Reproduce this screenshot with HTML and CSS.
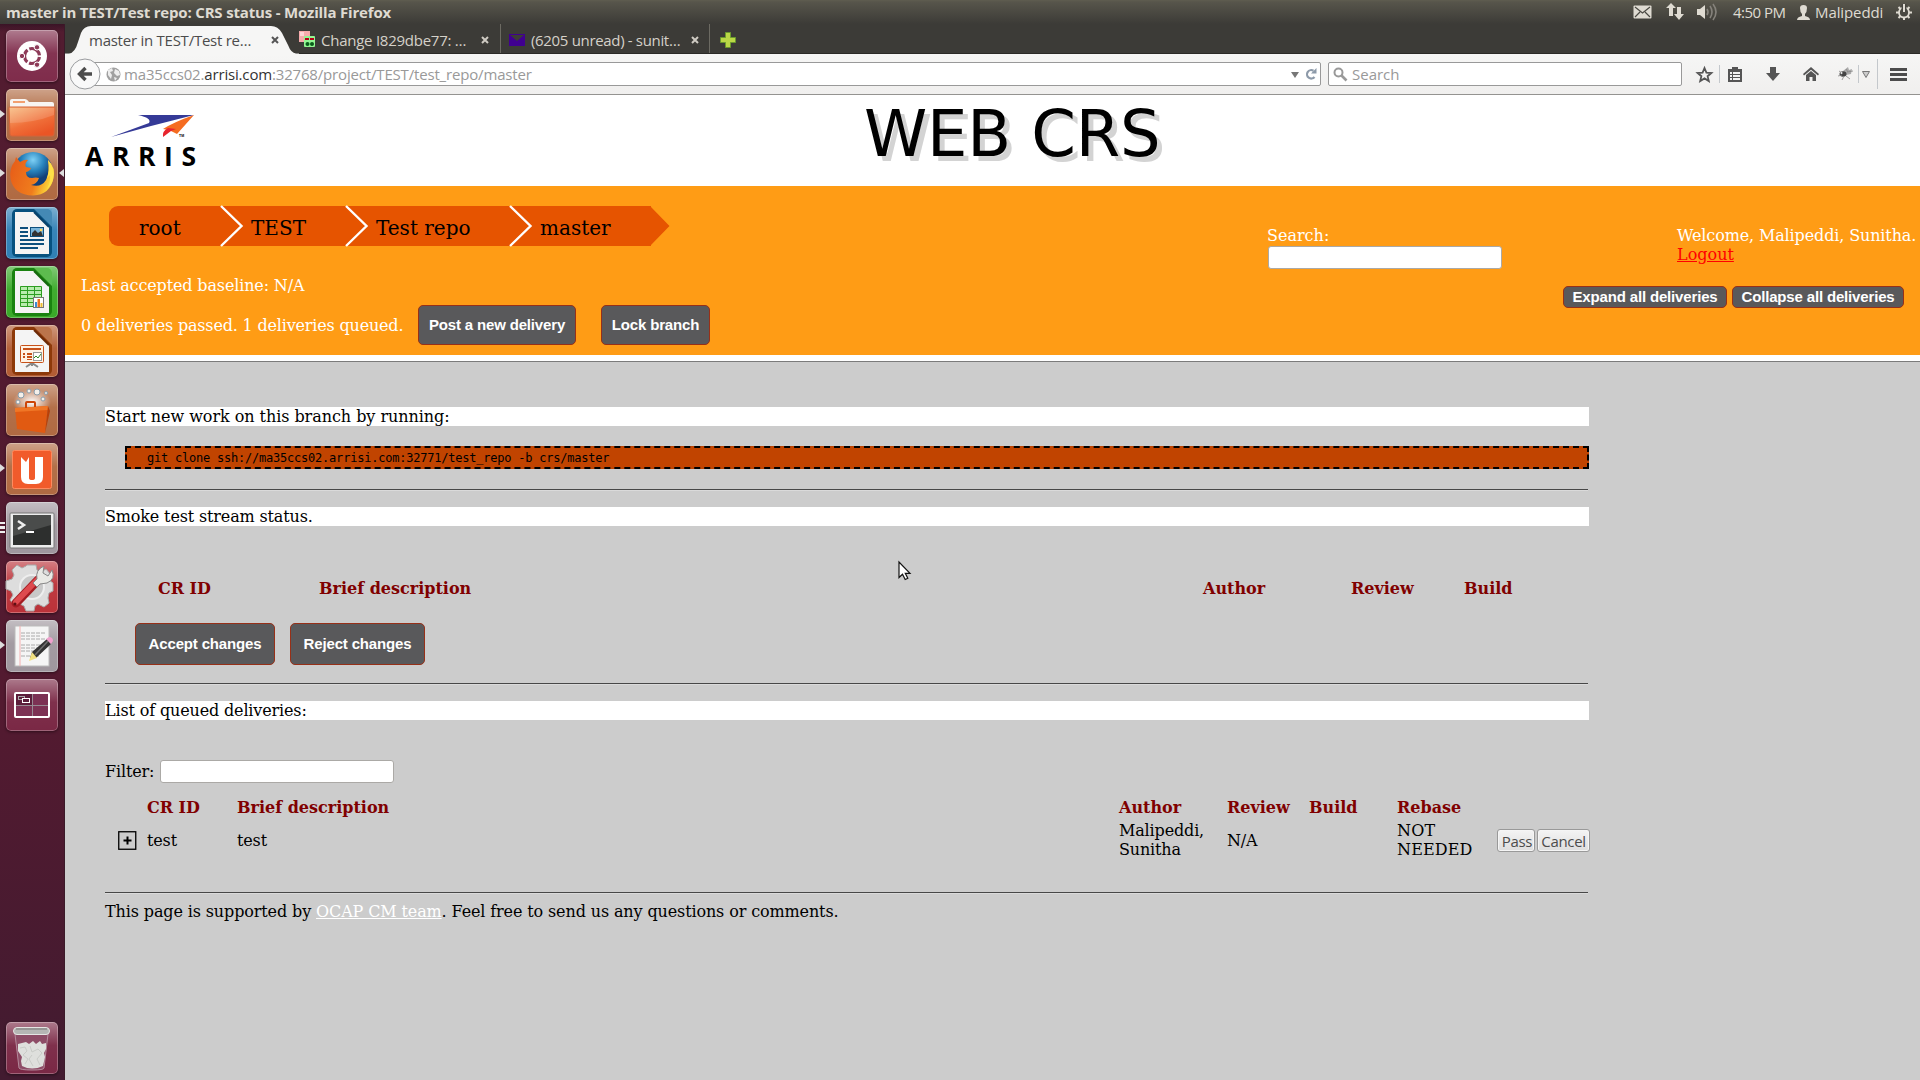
FILE: index.html
```
<!DOCTYPE html>
<html lang="en">
<head>
<meta charset="utf-8">
<title>master in TEST/Test repo: CRS status</title>
<link rel="stylesheet" href="styles.css">
</head>
<body>
<header class="panel">
  <div class="panel-title">master in TEST/Test repo: CRS status - Mozilla Firefox</div>
  <svg class="ind mail" width="19" height="14" viewBox="0 0 19 14"><rect x=".5" y=".5" width="18" height="13" rx="1" fill="#dfdbd2"/><path d="M2 2l7.500 6L17 2M2 12l5-5M17 12l-5-5" fill="none" stroke="#4a4943" stroke-width="1.200"/></svg>
  <svg class="ind net" width="19" height="18" viewBox="0 0 19 18"><path d="M5 0l5 5H7v8H3V5H0zM11 4h4v7h3l-5 6-5-6h3z" fill="#dfdbd2"/></svg>
  <svg class="ind vol" width="21" height="18" viewBox="0 0 21 18"><path d="M0 6h3l5-4v14l-5-4H0z" fill="#dfdbd2"/><path d="M10 6q2 3 0 6M13 3q4 6 0 12M16 1q6 8 0 16" fill="none" stroke="#85827b" stroke-width="1.600"/></svg>
  <span class="clock">4:50 PM</span>
  <svg class="ind user" width="13" height="15" viewBox="0 0 13 15"><path d="M3 3q0-3 3.500-3T10 3q0 4-2 6v2q5 1 5 4H0q0-3 5-4V9Q3 7 3 3z" fill="#dfdbd2"/></svg>
  <span class="who">Malipeddi</span>
  <svg class="ind gear" width="16" height="16" viewBox="0 0 16 16"><circle cx="8" cy="8.500" r="5" fill="none" stroke="#dfdbd2" stroke-width="1.800"/><path d="M0 8.500h3M13 8.500h3M8 13v3M2.500 3l2 2M13.500 3l-2 2M2.500 14l2-2M13.500 14l-2-2" stroke="#dfdbd2" stroke-width="2"/><path d="M8 0v8" stroke="#46453f" stroke-width="5"/><path d="M8 0v8" stroke="#dfdbd2" stroke-width="2"/></svg>
</header>
<div class="desktop">
  <nav class="launcher">
    <div class="tile dash"><svg width="52" height="52" viewBox="0 0 52 52"><circle cx="26" cy="26" r="15" fill="#fff"/><circle cx="26" cy="26" r="7.500" fill="none" stroke="#8d3a58" stroke-width="3.200" stroke-dasharray="13.700 2" stroke-dashoffset="-1"/><g fill="#8d3a58" stroke="#fff" stroke-width="1"><circle cx="16" cy="26" r="2.700"/><circle cx="31" cy="17.300" r="2.700"/><circle cx="31" cy="34.700" r="2.700"/></g></svg></div>
    <div class="tile brown"><i class="run"></i><svg width="52" height="52" viewBox="0 0 52 52"><defs><linearGradient id="fo" x2=".6" y2="1"><stop stop-color="#f8bd80"/><stop offset=".6" stop-color="#f0703a"/><stop offset="1" stop-color="#ea5525"/></linearGradient></defs><path d="M4 12q0-2 2-2h13q2 0 4 3h23q2 0 2 2v5H4z" fill="#f8f5f2"/><path d="M7 12h12v2H7z" fill="#f2a070"/><path d="M3 19q0-1 1-1h44q1 0 1 1l-1 26q0 2-2 2H6q-2 0-2-2z" fill="url(#fo)" stroke="#d5653a"/><path d="M4 34q24 0 44-8V19H4z" fill="#fff" opacity=".15"/></svg></div>
    <div class="tile brown"><i class="run"></i><i class="focus"></i><svg width="52" height="52" viewBox="0 0 52 52"><defs><radialGradient id="gl" cx=".5" cy=".2"><stop stop-color="#7ed0f5"/><stop offset=".55" stop-color="#2783bd"/><stop offset="1" stop-color="#123f78"/></radialGradient><linearGradient id="fx" x2="1" y2=".3"><stop stop-color="#e65a18"/><stop offset=".7" stop-color="#f07d1d"/><stop offset="1" stop-color="#fbd036"/></linearGradient></defs><circle cx="27" cy="24" r="20" fill="url(#gl)"/><path d="M42 12q8 8 5.500 18Q44 47 27 47.500 8 47 4.500 31 3 20 9 13l1-4 4 5q5-3 8-2-4 4-2 7l5 1q-1 3-5 4 0 6 6 6 4-1 7 0-2 6-8 7 10 3 15-5 4-8 2-20z" fill="url(#fx)"/><path d="M42 12q8 8 5 20-2 6-6 9 4-8 3-14l-3 3q3-8 1-18z" fill="#ffdf48"/></svg></div>
    <div class="tile blue"><svg width="52" height="52" viewBox="0 0 52 52"><rect x="6" y="2" width="40" height="48" rx="5" fill="#07517f"/><path d="M28 2h18v18z" fill="#5ea1cc" opacity=".7"/><path d="M9 5h19l15 15v27H9z" fill="#f4f4f4"/><path d="M28 5l15 15" stroke="#07416b" stroke-width="2"/><g fill="#0d4f7d"><path d="M14 20h8v2h-8zM14 24h8v2h-8zM14 28h8v2h-8zM14 32h24v2H14zM14 36h24v2H14zM14 40h18v2H14z"/></g><rect x="24.500" y="20.500" width="13" height="9" fill="#7ab5da" stroke="#0d4f7d"/><path d="M26 29v-3l3-3 3 3 3-2 2 5z" fill="#333"/><circle cx="35" cy="23" r="1.300" fill="#ffd75a"/></svg></div>
    <div class="tile green"><svg width="52" height="52" viewBox="0 0 52 52"><rect x="6" y="2" width="40" height="48" rx="5" fill="#1a8210"/><path d="M28 2h18v18z" fill="#7bd36a" opacity=".7"/><path d="M9 5h19l15 15v27H9z" fill="#f4f4f4"/><path d="M28 5l15 15" stroke="#16680e" stroke-width="2"/><path d="M14.500 20.500h21v20h-21zM14.500 24.500h21M14.500 28.500h21M14.500 32.500h21M14.500 36.500h21M21.500 20v20M28.500 20v20" fill="#b9ecae" stroke="#2d9e21"/><rect x="27.500" y="31.500" width="10" height="10" fill="#fff" stroke="#777"/><path d="M29 36h2v5h-2z" fill="#3b8bd4"/><path d="M31.500 33h2.500v8h-2.500z" fill="#ed7020"/><path d="M34.500 37h2v4h-2z" fill="#edbd30"/></svg></div>
    <div class="tile rust"><svg width="52" height="52" viewBox="0 0 52 52"><rect x="6" y="2" width="40" height="48" rx="5" fill="#8d3909"/><path d="M28 2h18v18z" fill="#cf8d68" opacity=".7"/><path d="M9 5h19l15 15v27H9z" fill="#f4f4f4"/><path d="M28 5l15 15" stroke="#6b2a07" stroke-width="2"/><path d="M26 37v4M20 42l6-4 6 4" fill="none" stroke="#888" stroke-width="2"/><rect x="14.500" y="20.500" width="23" height="17" rx="1" fill="#fff3e5" stroke="#c75119"/><path d="M17 23h18v2H17zM21 28h5v2h-5zM21 31h5v2h-5zM21 34h5v1h-5zM17 28h2v2h-2zM17 31h2v2h-2z" fill="#c75119"/><rect x="27.500" y="27.500" width="8" height="8" fill="#fff" stroke="#999"/><path d="M28 33l2-2 2 2 3-4" fill="none" stroke="#2a8a20"/></svg></div>
    <div class="tile brown"><svg width="52" height="52" viewBox="0 0 52 52"><defs><radialGradient id="bs"><stop stop-color="#fff"/><stop offset="1" stop-color="#fff" stop-opacity="0"/></radialGradient></defs><ellipse cx="26" cy="18" rx="19" ry="13" fill="url(#bs)"/><g fill="#f4f0ea" stroke="#8a9dab"><circle cx="15" cy="11" r="3"/><circle cx="23" cy="7" r="2"/><circle cx="31" cy="8" r="3"/><circle cx="37" cy="15" r="2"/><circle cx="40" cy="9" r="1.500"/><circle cx="12" cy="18" r="2"/></g><path d="M9 24l33-2-3 27-28-4z" fill="#e15a12"/><path d="M9 24l33-2v4l-33 2z" fill="#f07626"/><path d="M20 24v-5q0-1 1-1h7q1 0 1 1v4" fill="none" stroke="#cc4508" stroke-width="2"/><path d="M42 22l2 5-5 22z" fill="#b84009"/></svg></div>
    <div class="tile brown"><i class="run"></i><svg width="52" height="52" viewBox="0 0 52 52"><rect x="6.500" y="7.500" width="39" height="38" rx="2" fill="#f15b2b" stroke="#ff8a5e"/><path d="M15 14l5 5 3-5v21q0 2 3 2t3-2V14h8v20q0 7-7 7h-8q-7 0-7-7z" fill="#fff"/></svg></div>
    <div class="tile grey"><i class="multi"></i><svg width="52" height="52" viewBox="0 0 52 52"><rect x="4" y="11" width="44" height="35" rx="1" fill="#ededed" stroke="#777"/><rect x="7" y="13" width="38" height="30" fill="#2d2f2e"/><path d="M7 13h38v10L7 34z" fill="#4a4c4b"/><path d="M12 19l6 4-6 4" fill="none" stroke="#eee" stroke-width="2.500"/><path d="M20 30h8" stroke="#fff" stroke-width="2"/></svg></div>
    <div class="tile red"><svg width="52" height="52" viewBox="0 0 52 52"><path d="M21 4h9l1 5 4 2 5-3 5 6-2 5 4 3v8l-4 2-1 5 1 5-5 4-6-3-3 2-1 5h-8l-2-5-4-2-5 2-5-6 3-5-2-4-5-2v-8l6-2 2-4-2-5 5-5 5 3 4-2z" fill="#ddd" stroke="#aaa"/><circle cx="26" cy="26" r="12" fill="#c8c8c8" stroke="#eee" stroke-width="2"/><path d="M10 42l22-23" stroke="#a41c22" stroke-width="9" stroke-linecap="round"/><path d="M10 41l21-22" stroke="#de4a4e" stroke-width="5.500" stroke-linecap="round"/><path d="M31 18q-2-9 7-13l-1 7 5 3 4-6q4 9-5 13l-7 1-3 3-4-4z" fill="#e9e9e5" stroke="#888"/><circle cx="9" cy="43" r="1.500" fill="#5c1014"/></svg></div>
    <div class="tile grey"><i class="run"></i><svg width="52" height="52" viewBox="0 0 52 52"><rect x="9" y="6" width="34" height="40" fill="#f5f5f5" stroke="#bbb"/><path d="M14 6v40" stroke="#f5b0b0"/><path d="M15 13h24M15 16h20M15 19h24M15 25h24M15 28h20M15 31h22M15 36h18" stroke="#aaa" stroke-dasharray="4 1"/><path d="M24 38l2-6 15-13 4 5-15 14z" fill="#333"/><path d="M29 35l13-14" stroke="#6f6f6f" stroke-width="1.500"/><path d="M23 41l3-9 5 6z" fill="#f0e080"/><path d="M40 19l3-2q4 0 4 4l-2 3z" fill="#f0a0cd"/></svg></div>
    <div class="tile plum"><svg width="52" height="52" viewBox="0 0 52 52"><path d="M9 14h34v24H9z" fill="#5c1e3b"/><path d="M27 14h16v24H9V26h18z" fill="#7c3254"/><path d="M26.500 15v22M10 26.500h32" stroke="#978b93"/><rect x="9" y="14" width="34" height="24" rx="1" fill="none" stroke="#fff" stroke-width="2"/><rect x="12.500" y="17.500" width="6" height="3" fill="none" stroke="#aaa"/><rect x="16.500" y="19.500" width="7" height="4" fill="#5c1e3b" stroke="#fff"/></svg></div>
    <div class="tile plum trash"><svg width="52" height="52" viewBox="0 0 52 52"><path d="M9 12h33l-4 34q0 2-12 2t-13-2z" fill="#8d4c66" stroke="#b48a9b"/><path d="M12 22l4-1 4-1 3 2 4-3 3 3 4-3 2 3 4-1v6l-2 4 1 4-2 9q-11 5-21 0l-1-5 1-4-4-6z" fill="#dedfdc"/><path d="M14 26l5-1 2 4-4 4 5 4-3 5M24 24l2 6 6-3 4 4-5 6 3 6M26 33l-3 4 4 7" stroke="#c9cbc7" fill="none"/><rect x="7.500" y="5.500" width="36" height="7" rx="3.500" fill="#b5b6b4" stroke="#e5e5e3"/><path d="M10 7h31" stroke="#777"/></svg></div>
  </nav>
  <div class="window">
    <div class="tabs">
      <div class="tab active"><svg class="tabshape" width="234" height="29" viewBox="0 0 234 29"><path d="M0 29V27.500H4Q10 27 13 16L16 7Q19 0 26 0H206Q213 0 217 7L223 19Q226 27 231 27.500H234V29z" fill="#f6f6f5"/></svg><span class="tabtext t1">master in TEST/Test re…</span><svg class="x" width="8" height="8" viewBox="0 0 8 8"><path d="M1 1l6 6M7 1l-6 6" stroke="#555" stroke-width="2"/></svg></div>
      <div class="tab second"><svg width="17" height="17" viewBox="0 0 17 17"><rect width="11" height="11" fill="#f6abac"/><path d="M1 1h4v4H1z" fill="#fcd5d5"/><rect x="5" y="5" width="11" height="11" rx="1" fill="#92f692"/><path d="M6 7h4v2H6zM11 7h4v2h-4z" fill="#b50019"/><circle cx="8.500" cy="13" r="2" fill="#075c18"/><circle cx="13" cy="13" r="2" fill="#075c18"/></svg><span class="tabtext t2">Change I829dbe77: …</span><svg class="x" width="8" height="8" viewBox="0 0 8 8"><path d="M1 1l6 6M7 1l-6 6" stroke="#cfcbc3" stroke-width="2"/></svg></div>
      <div class="tab third"><svg width="16" height="12" viewBox="0 0 16 12"><path d="M0 0h16v12H0z" fill="#400090"/><path d="M1 1h14L8 7z" fill="#3c3b37"/></svg><span class="tabtext t3">(6205 unread) - sunit…</span><svg class="x" width="8" height="8" viewBox="0 0 8 8"><path d="M1 1l6 6M7 1l-6 6" stroke="#cfcbc3" stroke-width="2"/></svg></div>
      <svg class="plus" width="16" height="16" viewBox="0 0 16 16"><path d="M5.500.5h5v5h5v5h-5v5h-5v-5h-5v-5h5z" fill="#bbd846" stroke="#6b9a2d"/></svg>
    </div>
    <div class="toolbar">
      <svg class="back" width="32" height="32" viewBox="0 0 32 32"><circle cx="16" cy="16" r="15" fill="#f9f9f9" stroke="#9a9c9f"/><path d="M16.500 10l-6 6 6 6M11 16h12" fill="none" stroke="#4c4c4c" stroke-width="3.400"/></svg>
      <div class="url"><svg width="15" height="15" viewBox="0 0 15 15"><circle cx="7.500" cy="7.500" r="7" fill="#a0a0a0"/><path d="M2 3l4-2 1 3-3 1 2 3-1 4-3-4zM9 2l4 2 1 4-3 1-3-3zM8 10l3 1-2 3z" fill="#ededed"/></svg><span class="address">ma35ccs02.<b>arrisi.com</b>:32768/project/TEST/test_repo/master</span><svg class="go" width="27" height="14" viewBox="0 0 27 14"><path d="M0 5h8l-4 6z" fill="#777"/><path d="M23.500 10A4.200 4.200 0 1 1 22.500 3.800" fill="none" stroke="#8d9aa9" stroke-width="2.200"/><path d="M25.500 1v5.500H20z" fill="#8d9aa9"/></svg></div>
      <div class="find"><svg width="15" height="15" viewBox="0 0 15 15"><circle cx="5.500" cy="5.500" r="4" fill="none" stroke="#999" stroke-width="2"/><path d="M8.500 8.500l5 5" stroke="#999" stroke-width="2.600"/></svg><span>Search</span></div>
      <svg class="tool star" width="17" height="17" viewBox="0 0 17 17"><path d="M8.500 2l1.900 4.600 5 .4-3.800 3.200 1.200 4.900-4.300-2.700-4.300 2.700 1.200-4.900L1.600 7l5-.4z" fill="none" stroke="#555" stroke-width="1.800"/></svg>
      <i class="vr"></i>
      <svg class="tool clip" width="14" height="15" viewBox="0 0 14 15"><path d="M0 2h4V0h6v2h4v13H0z" fill="#555"/><path d="M2 5h2v2H2zM5 5h7v2H5zM2 8h2v2H2zM5 8h7v2H5zM2 11h2v2H2zM5 11h7v2H5z" fill="#f3f3f3"/></svg>
      <svg class="tool down" width="14" height="14" viewBox="0 0 14 14"><path d="M4 0h6v6h4l-7 8-7-8h4z" fill="#555"/></svg>
      <svg class="tool home" width="16" height="14" viewBox="0 0 16 14"><path d="M8 0l8 7-1 1.500L8 2.700 1 8.500 0 7z" fill="#555"/><path d="M8 4l5 4v6H9.500v-4h-3v4H3V8z" fill="#555"/></svg>
      <svg class="tool bug" width="16" height="14" viewBox="0 0 16 14"><path d="M5 4l5-4 1 3 3-1-1 5-5 1z" fill="#aaa"/><ellipse cx="5" cy="7" rx="3.500" ry="2.700" fill="#444"/><path d="M1 4l3 2M0 9l4-1M4 13l2-4M8 9l4 3M9 5l6-1M8 2l2 3" stroke="#888" stroke-width=".8"/><circle cx="3.500" cy="6" r="1" fill="#eee"/></svg>
      <i class="vr two"></i>
      <svg class="tool tri" width="8" height="7" viewBox="0 0 8 7"><path d="M.5.5h7L4 6.500z" fill="#ccc" stroke="#777"/></svg>
      <i class="vr three"></i>
      <svg class="tool menu" width="17" height="13" viewBox="0 0 17 13"><path d="M0 1.500h17M0 6.500h17M0 11.500h17" stroke="#4c4c4c" stroke-width="3"/></svg>
    </div>
    <div class="masthead">
      <svg class="logo" width="112" height="54" viewBox="0 0 112 54"><path d="M53 1h56L66 12 26 23l38-14q3-5-11-8z" fill="#353a97"/><path d="M109 1L92 20l-8-4-6-1q11-7 31-14z" fill="#f56c21"/><path d="M78 23q-1-6 5-9l8 1-5 2z" fill="#e8242d"/><text x="94" y="23" class="tm">TM</text><text x="0" y="52" textLength="111" lengthAdjust="spacing" class="brand">ARRIS</text></svg>
      <h1>WEB CRS</h1>
    </div>
    <div class="banner">
      <div class="left">
        <div class="crumbs">
          <a class="crumb c1">root</a>
          <a class="crumb c2"><svg width="24" height="42" viewBox="0 0 24 42"><path d="M0 1l20.500 20L0 41" fill="none" stroke="#fff" stroke-width="2.400"/></svg>TEST</a>
          <a class="crumb c3"><svg width="24" height="42" viewBox="0 0 24 42"><path d="M0 1l20.500 20L0 41" fill="none" stroke="#fff" stroke-width="2.400"/></svg>Test repo</a>
          <a class="crumb c4"><svg width="24" height="42" viewBox="0 0 24 42"><path d="M0 1l20.500 20L0 41" fill="none" stroke="#fff" stroke-width="2.400"/></svg>master</a>
          <svg width="19" height="40" viewBox="0 0 19 40"><path d="M0 0v1l18.500 19L0 39z" fill="#e65400"/></svg>
        </div>
        <div class="baseline">Last accepted baseline: N/A</div>
        <div class="status"><span>0 deliveries passed. 1 deliveries queued.</span><button class="btn post">Post a new delivery</button><button class="btn lock">Lock branch</button></div>
      </div>
      <div class="right">
        <div class="account">
          <div class="search"><div>Search:</div><input type="text" class="field"></div>
          <div class="welcome">Welcome, Malipeddi, Sunitha.<br><a>Logout</a></div>
        </div>
        <div class="folds"><button class="btn expand">Expand all deliveries</button><button class="btn collapse">Collapse all deliveries</button></div>
      </div>
    </div>
    <main class="content">
      <div class="bar start">Start new work on this branch by running:</div>
      <pre class="code">git clone ssh://ma35ccs02.arrisi.com:32771/test_repo -b crs/master</pre>
      <div class="rule r1"></div>
      <div class="bar">Smoke test stream status.</div>
      <div class="smoke"><span>CR ID</span><span>Brief description</span><span>Author</span><span>Review</span><span>Build</span></div>
      <div class="actions"><button class="btn accept">Accept changes</button><button class="btn reject">Reject changes</button></div>
      <div class="rule r2"></div>
      <div class="bar">List of queued deliveries:</div>
      <div class="filter"><span>Filter:</span><input type="text" class="field"></div>
      <div class="queue head"><span></span><span>CR ID</span><span>Brief description</span><span>Author</span><span>Review</span><span>Build</span><span>Rebase</span></div>
      <div class="queue row"><span class="expander"><svg width="19" height="19" viewBox="0 0 19 19"><rect x=".75" y=".75" width="17" height="17.500" fill="none" stroke="#000" stroke-width="1.300"/><path d="M5.500 9.500h8M9.500 5.500v8" stroke="#000" stroke-width="2"/></svg></span><span>test</span><span>test</span><span class="author">Malipeddi,<br>Sunitha</span><span>N/A</span><span></span><span class="rebase">NOT<br>NEEDED</span><span class="ops"><button class="native pass">Pass</button><button class="native cancel">Cancel</button></span></div>
      <div class="rule r3"></div>
      <div class="support">This page is supported by <a>OCAP CM team</a>. Feel free to send us any questions or comments.</div>
    </main>
  </div>
</div>
<svg class="cursor" width="14" height="20" viewBox="0 0 14 20"><path d="M1 1v15.500l3.500-3.300 2.700 5.300 2.600-1.200-2.500-5H12z" fill="#fff" stroke="#111" stroke-width="1.200"/></svg>
</body>
</html>
```
FILE: styles.css
```
* { box-sizing: border-box; }
body { margin: 0; width: 1920px; height: 1080px; overflow: hidden; display: flex; flex-direction: column; background: #ccc; font: 16px/19px "DejaVu Serif", serif; color: #000; }
svg { display: block; flex: none; overflow: visible; }
button { margin: 0; padding: 0; white-space: nowrap; flex: none; }

.panel { height: 24px; flex: none; display: flex; align-items: center; background: linear-gradient(#5f5d50, #57554b 2px, #3c3b37); color: #dfdbd2; font: 15px/24px "Open Sans", sans-serif; white-space: nowrap; padding-left: 6px; }
.panel-title { width: 1627px; font-weight: 700; letter-spacing: -.18px; }
.net { margin-left: 14px; }
.vol { margin-left: 12px; }
.clock { width: 54px; margin-left: 15px; letter-spacing: -.5px; }
.user { margin-left: 10px; }
.who { width: 69px; margin-left: 5px; letter-spacing: -.1px; }
.gear { margin-left: 12px; }

.desktop { flex: 1; min-height: 0; display: flex; }
.launcher { width: 65px; flex: none; padding: 6px 0 6px 6px; display: flex; flex-direction: column; gap: 7px; background: linear-gradient(#3a1426, #521c30 8px, #531a30 65%, #421b30); border-right: 1px solid #3b1a29; }
.tile { position: relative; width: 52px; height: 52px; flex: none; border-radius: 5px; box-shadow: inset 0 0 0 1px rgba(255,255,255,.28), 0 1px 3px rgba(0,0,0,.45); background-image: linear-gradient(rgba(255,255,255,.38), rgba(255,255,255,.04) 45%, transparent); }
.dash { background-color: #7f2c4b; }
.brown { background-color: #b06a42; }
.blue { background-color: #2f7fb5; }
.green { background-color: #39a928; }
.rust { background-color: #b25c33; }
.grey { background-color: #9f979e; }
.red { background-color: #bb3239; }
.plum { background-color: #7a2845; }
.trash { margin-top: auto; }
.run, .focus, .multi { position: absolute; top: 21px; left: -6px; border: solid transparent; border-width: 4px 0 4px 5px; border-left-color: #ddd; }
.focus { left: 53px; border-width: 4px 5px 4px 0; border-right-color: #ddd; }
.multi { top: 20px; width: 5px; height: 11px; border: 0; background: repeating-linear-gradient(#eee 0 2px, transparent 2px 4.500px); }

.window { flex: 1; min-width: 0; display: flex; flex-direction: column; }
.tabs { height: 30px; flex: none; display: flex; background: #3c3b37; border-bottom: 1px solid #2b2a27; font: 15px/20px "Open Sans", sans-serif; color: #d5d1c9; white-space: nowrap; }
.tab { display: flex; align-items: center; padding-top: 2px; }
.tabtext { position: relative; white-space: nowrap; }
.active { position: relative; width: 234px; color: #4c4c4c; padding-left: 24px; }
.tabshape { position: absolute; left: 0; top: 2px; }
.x { position: relative; }
.t1 { width: 182px; letter-spacing: -.25px; }
.t2 { width: 160px; margin-left: 5px; letter-spacing: -.25px; }
.t3 { width: 160px; margin-left: 6px; letter-spacing: -.33px; }
.second { width: 202px; border-right: 1px solid #6c6a62; }
.third { width: 209px; padding-left: 8px; border-right: 1px solid #6c6a62; }
.plus { margin: 8px 0 0 10px; }
.toolbar { height: 41px; flex: none; display: flex; align-items: center; background: linear-gradient(#f6f6f5, #f0efee); border-bottom: 1px solid #949390; font: 15px/22px "Open Sans", sans-serif; color: #999; white-space: nowrap; }
.back { position: relative; margin-left: 4px; z-index: 1; }
.url { width: 1230px; height: 24px; margin-left: -10px; padding: 0 2px 0 14px; display: flex; align-items: center; border: 1px solid #999; border-radius: 2px; background: #fff; }
.address { margin-left: 3px; letter-spacing: -.17px; flex: 1; }
.address b { font-weight: 400; color: #333; }
.find { width: 354px; height: 24px; margin-left: 7px; padding-left: 4px; display: flex; align-items: center; gap: 4px; border: 1px solid #999; border-radius: 2px; background: #fff; }
.star { margin-left: 14px; }
.vr { width: 1px; height: 18px; margin-left: 6px; background: #c4c8cc; }
.clip { margin-left: 8px; }
.down { margin-left: 24px; }
.home { margin-left: 23px; }
.bug { margin-left: 19px; }
.two { margin-left: 4px; }
.tri { margin-left: 3px; }
.three { height: 30px; margin-left: 7px; }
.menu { margin-left: 12px; }

.masthead { height: 91px; flex: none; display: flex; background: #fff; }
.logo { margin: 19px 0 0 20px; }
.brand { font: 700 26.500px "Open Sans", sans-serif; }
.tm { font: 700 3.500px "Liberation Sans", sans-serif; }
h1 { margin: 2px 0 0 667px; font: 64px/74px "DejaVu Sans", sans-serif; letter-spacing: -.2px; text-shadow: 5px 5px 0 #d3d3d3; white-space: nowrap; }

.banner { height: 176px; flex: none; display: flex; justify-content: space-between; background: #ff9c15; border-bottom: 1px solid #7b7b7b; box-shadow: inset 0 -6px 0 #fff; color: #fff; white-space: nowrap; }
.left { padding: 20px 0 0 16px; }
.crumbs { display: flex; height: 40px; margin-left: 28px; font-size: 20px; line-height: 45px; color: #000; }
.crumb { display: flex; background: #e65400; }
.crumb svg { margin: -1px 6px 0 0; }
.c1 { width: 112px; padding-left: 30px; border-radius: 9px 0 0 9px; }
.c2 { width: 125px; }
.c3 { width: 164px; }
.c4 { width: 141px; }
.baseline { margin-top: 30px; letter-spacing: -.14px; }
.status { display: flex; align-items: center; height: 40px; margin-top: 10px; }
.status span { width: 337px; letter-spacing: -.18px; }
.btn { height: 40px; border: 1px solid #973018; border-radius: 5px; background: #59595b; color: #fff; font: 700 15px/18px "Liberation Sans", sans-serif; letter-spacing: -.16px; }
.post { width: 158px; }
.lock { width: 109px; margin-left: 25px; }
.right { width: 653px; padding-top: 40px; }
.account { display: flex; justify-content: space-between; }
.search { width: 235px; }
.field { display: block; width: 234px; height: 23px; padding: 0; border: 1px solid #aba9a6; border-radius: 3px; background: #fff; }
.search .field { margin: 1px 0 0 1px; }
.welcome { width: 243px; letter-spacing: -.13px; }
.welcome a { color: #f00; text-decoration: underline; letter-spacing: 0; }
.folds { display: flex; gap: 5px; margin: 17px 0 0 296px; }
.folds .btn { height: 22px; }
.expand { width: 164px; }
.collapse { width: 172px; }

.content { flex: 1; width: 1524px; padding: 45px 0 0 40px; background: #ccc; }
.bar { height: 19px; background: #fff; letter-spacing: -.15px; }
.start { letter-spacing: -.05px; }
.code { height: 23px; margin: 20px 0 0 20px; padding-left: 20px; border: 2px dashed #000; background: #c14400; font: 12px/21px "DejaVu Sans Mono", monospace; letter-spacing: -.22px; }
.rule { width: 1483px; height: 2px; background: linear-gradient(#474747 50%, #dadada 50%); }
.r1 { margin: 20px 0 16px; }
.smoke { display: grid; grid-template-columns: 161px 884px 148px 113px 1fr; margin: 53px 0 0 53px; color: maroon; font-weight: 700; }
.actions { display: flex; gap: 15px; margin: 25px 0 0 30px; }
.actions .btn { height: 42px; }
.accept { width: 140px; }
.reject { width: 135px; }
.r2 { margin: 18px 0 16px; }
.filter { display: flex; align-items: center; margin-top: 40px; }
.filter span { width: 55px; letter-spacing: -.15px; }
.queue { display: grid; grid-template-columns: 42px 90px 882px 108px 82px 88px 100px auto; align-items: center; }
.head { margin-top: 15px; color: maroon; font-weight: 700; }
.row { margin-top: 4px; height: 38px; letter-spacing: -.15px; }
.rebase { letter-spacing: .15px; }
.expander { padding-left: 13px; }
.ops { display: flex; gap: 2px; padding-top: 1px; }
.native { height: 23px; border: 1px solid #999; border-radius: 3px; background: linear-gradient(#f4f4f4, #dedede); box-shadow: inset 0 0 0 1px #f5f5f5; color: #4c4c4c; font: 15px/20px "Open Sans", sans-serif; letter-spacing: -.35px; }
.pass { width: 38px; padding-left: 2px; }
.cancel { width: 53px; }
.r3 { margin: 33px 0 8px; }
.support { letter-spacing: -.125px; }
.support a { color: #fff; text-decoration: underline; }
.cursor { position: absolute; left: 898px; top: 561px; }
```
